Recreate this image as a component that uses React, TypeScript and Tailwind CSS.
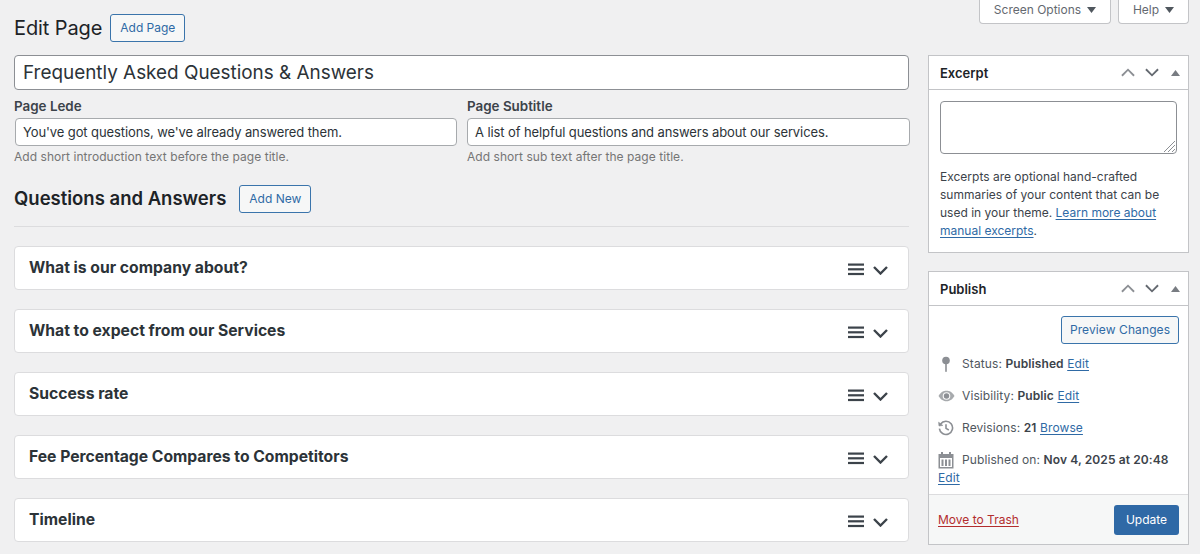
import React from 'react';

const font = "font-['Inter','Liberation_Sans',sans-serif]";

const Burger = () => (
  <svg width="16" height="13" viewBox="0 0 16 13" fill="#3c434a">
    <rect x="0" y="0.5" width="16" height="2.2" />
    <rect x="0" y="5.2" width="16" height="2.2" />
    <rect x="0" y="9.9" width="16" height="2.2" />
  </svg>
);

const Chevron = ({ up = false, color = '#3c434a', w = 15, h = 9, sw = 2.4 }: { up?: boolean; color?: string; w?: number; h?: number; sw?: number }) => (
  <svg width={w} height={h} viewBox="0 0 15 9" fill="none">
    <path d={up ? 'M1 8 L7.5 1.5 L14 8' : 'M1 1 L7.5 7.5 L14 1'} stroke={color} strokeWidth={sw} />
  </svg>
);

const Caret = ({ up = false, color = '#50575e' }: { up?: boolean; color?: string }) => (
  <svg width="9" height="6" viewBox="0 0 9 6" fill={color}>
    <path d={up ? 'M4.5 0 L9 6 L0 6 Z' : 'M0 0 L9 0 L4.5 6 Z'} />
  </svg>
);

const Handles = () => (
  <div className="flex items-center">
    <Chevron up color="#8c8f94" w={14} h={9} sw={2} />
    <span className="ml-[10px]"><Chevron color="#646970" w={14} h={9} sw={2} /></span>
    <span className="ml-[12px]"><Caret up color="#787c82" /></span>
  </div>
);

const A = ({ children }: { children: React.ReactNode }) => (
  <a className="text-[#2f6aa5] underline underline-offset-2 decoration-1">{children}</a>
);

const SecondaryButton = ({ children, className = '' }: { children: React.ReactNode; className?: string }) => (
  <button className={`h-[28px] rounded-[3px] border border-[#3a74ab] bg-[#f6f7f7] text-[12px] text-[#2f6aa5] flex items-center justify-center ${className}`}>
    {children}
  </button>
);

const PinIcon = () => (
  <svg width="10" height="17" viewBox="0 0 10 17" fill="#8c8f94">
    <circle cx="5" cy="4.5" r="3.8" />
    <rect x="4.2" y="7" width="1.6" height="9" rx="0.8" />
  </svg>
);

const EyeIcon = () => (
  <svg width="17" height="12" viewBox="0 0 17 12">
    <path d="M0.5 6 C3 2 5.5 0.8 8.5 0.8 C11.5 0.8 14 2 16.5 6 C14 10 11.5 11.2 8.5 11.2 C5.5 11.2 3 10 0.5 6 Z" fill="#a7aaad" />
    <circle cx="8.5" cy="6" r="3.8" fill="#f9f9f9" />
    <circle cx="8.5" cy="6" r="2.7" fill="#8c8f94" />
  </svg>
);

const HistoryIcon = () => (
  <svg width="16" height="16" viewBox="0 0 16 16" fill="none" stroke="#8c8f94" strokeWidth="1.6">
    <path d="M2.6 4 A6.6 6.6 0 1 1 1.4 8.6" />
    <path d="M0.6 2.2 L1 6 L4.8 5.4 Z" fill="#8c8f94" strokeWidth="0.6" />
    <path d="M8 4.2 V8.4 L10.8 10" />
  </svg>
);

const CalendarIcon = () => (
  <svg width="16" height="17" viewBox="0 0 16 17" fill="#8c8f94">
    <rect x="3" y="0" width="2" height="4" />
    <rect x="11" y="0" width="2" height="4" />
    <path d="M0.5 2 H15.5 V16.5 H0.5 Z M2 6 V15 H14 V6 Z" fillRule="evenodd" />
    <rect x="3.5" y="7.5" width="2" height="6.5" />
    <rect x="7" y="7.5" width="2" height="6.5" />
    <rect x="10.5" y="7.5" width="2" height="6.5" />
  </svg>
);

const faqs = [
  'What is our company about?',
  'What to expect from our Services',
  'Success rate',
  'Fee Percentage Compares to Competitors',
  'Timeline',
];

const Field = ({ label, value, help, className, outdent = '' }: { label: string; value: string; help: string; className: string; outdent?: string }) => (
  <div className={className}>
    <div className={`text-[13.4px] leading-[18px] font-semibold text-[#3c434a] ${outdent}`}>{label}</div>
    <div className="mt-[3px] h-[28px] rounded-[4px] border border-[#a7aaad] bg-white pl-[7px] pt-px flex items-center text-[13px] tracking-[-0.1px] text-[#2c3338]">
      {value}
    </div>
    <div className={`mt-[2px] text-[12px] leading-[18px] tracking-[0.05px] text-[#757575] ${outdent}`}>{help}</div>
  </div>
);

export default function App() {
  return (
    <div className={`${font} w-[1200px] h-[554px] overflow-hidden bg-[#f0f0f1] flex text-[#3c434a]`}>
      {/* Main column */}
      <div className="w-[928px] shrink-0 pl-[14px] pr-[19px]">
        <div className="flex items-center pt-[14px] h-[42px]">
          <h1 className="text-[20px] tracking-[-0.1px] leading-[28px] text-[#1d2327]">Edit Page</h1>
          <SecondaryButton className="ml-[8px] w-[75px]">Add Page</SecondaryButton>
        </div>

        <div className="mt-[13px] h-[35px] rounded-[4px] border border-[#8c8f94] bg-white pl-[8px] pt-[2px] flex items-center text-[18.9px] text-[#2c3338]">
          Frequently Asked Questions &amp; Answers
        </div>

        <div className="flex mt-[7px] pl-px -mr-px">
          <Field
            className="w-[442px]"
            outdent="-ml-px"
            label="Page Lede"
            value="You've got questions, we've already answered them."
            help="Add short introduction text before the page title."
          />
          <Field
            className="w-[443px] ml-[10px]"
            label="Page Subtitle"
            value="A list of helpful questions and answers about our services."
            help="Add short sub text after the page title."
          />
        </div>

        <div className="flex items-center mt-[19px] h-[28px]">
          <h2 className="text-[18.5px] leading-[26px] pb-[2px] font-semibold text-[#1d2327]">Questions and Answers</h2>
          <SecondaryButton className="ml-[13px] w-[72px]">Add New</SecondaryButton>
        </div>

        <div className="mt-[13px] border-t border-[#dcdcde]" />

        <div className="mt-[19px] flex flex-col gap-[19px]">
          {faqs.map((title) => (
            <div
              key={title}
              className="h-[44px] rounded-[4px] border border-[#dcdcde] bg-white pl-[14px] pr-[20px] flex items-center justify-between"
            >
              <span className="text-[15.7px] font-bold text-[#2c3338]">{title}</span>
              <div className="flex items-center gap-[9px] mt-[3px]">
                <Burger />
                <span className="mt-px"><Chevron /></span>
              </div>
            </div>
          ))}
        </div>
      </div>

      {/* Side column */}
      <div className="w-[261px] shrink-0">
        <div className="flex justify-end gap-[7px] h-[24px]">
          <div className="w-[132px] h-[24px] pb-[3px] rounded-b-[4px] border border-t-0 border-[#c3c4c7] bg-white flex items-center justify-center gap-[6px] text-[12px] text-[#646970]">
            Screen Options <Caret />
          </div>
          <div className="w-[71px] h-[24px] pb-[3px] rounded-b-[4px] border border-t-0 border-[#c3c4c7] bg-white flex items-center justify-center gap-[6px] text-[12px] text-[#646970]">
            Help <Caret />
          </div>
        </div>

        <div className="mt-[31px] h-[198px] border border-[#c3c4c7] bg-white">
          <div className="h-[34px] border-b border-[#c3c4c7] pl-[11px] pr-[8px] flex items-center justify-between">
            <span className="text-[13px] pt-[2px] font-semibold text-[#1d2327]">Excerpt</span>
            <Handles />
          </div>
          <div className="px-[11px] pt-[11px]">
            <div className="relative h-[53px] rounded-[4px] border border-[#8c8f94] bg-white">
              <svg className="absolute right-[1px] bottom-[1px]" width="12" height="12" viewBox="0 0 12 12" stroke="#8c8f94" strokeWidth="1">
                <path d="M1 12 L12 1 M5 12 L12 5 M9 12 L12 9" />
              </svg>
            </div>
            <p className="mt-[14px] text-[12px] leading-[18px] text-[#3c434a]">
              Excerpts are optional hand-crafted summaries of your content that can be used in your theme. <A>Learn more about manual excerpts</A>.
            </p>
          </div>
        </div>

        <div className="mt-[18px] h-[274px] border border-[#c3c4c7] bg-white flex flex-col">
          <div className="h-[34px] shrink-0 border-b border-[#c3c4c7] pl-[11px] pr-[8px] flex items-center justify-between">
            <span className="text-[13px] pt-[2px] font-semibold text-[#1d2327]">Publish</span>
            <Handles />
          </div>
          <div className="flex-1 px-[9px] text-[12px] tracking-[0.1px] text-[#50575e]">
            <div className="flex justify-end pt-[10px]">
              <SecondaryButton className="w-[118px]">Preview Changes</SecondaryButton>
            </div>
            <div className="flex items-center h-[18px] mt-[11px]">
              <span className="w-[24px] shrink-0 pl-[3px]"><PinIcon /></span>
              Status:&nbsp;<b className="font-semibold text-[#3c434a]">Published</b>&nbsp;<A>Edit</A>
            </div>
            <div className="flex items-center h-[18px] mt-[14px]">
              <span className="w-[24px] shrink-0"><EyeIcon /></span>
              Visibility:&nbsp;<b className="font-semibold text-[#3c434a]">Public</b>&nbsp;<A>Edit</A>
            </div>
            <div className="flex items-center h-[18px] mt-[14px]">
              <span className="w-[24px] shrink-0"><HistoryIcon /></span>
              Revisions:&nbsp;<b className="font-semibold text-[#3c434a]">21</b>&nbsp;<A>Browse</A>
            </div>
            <div className="flex items-center h-[18px] mt-[14px] whitespace-nowrap">
              <span className="w-[24px] shrink-0"><CalendarIcon /></span>
              Published on:&nbsp;<b className="font-semibold text-[#3c434a]">Nov 4, 2025 at 20:48</b>
            </div>
            <div className="h-[18px] leading-[18px]"><A>Edit</A></div>
          </div>
          <div className="h-[50px] shrink-0 border-t border-[#dcdcde] bg-[#f6f7f7] pl-[9px] pr-[9px] flex items-center justify-between">
            <a className="text-[12px] text-[#b32d2e] underline underline-offset-2 decoration-1">Move to Trash</a>
            <button className="w-[65px] h-[30px] rounded-[3px] bg-[#2f69a6] text-[12px] text-white">Update</button>
          </div>
        </div>
      </div>
    </div>
  );
}
